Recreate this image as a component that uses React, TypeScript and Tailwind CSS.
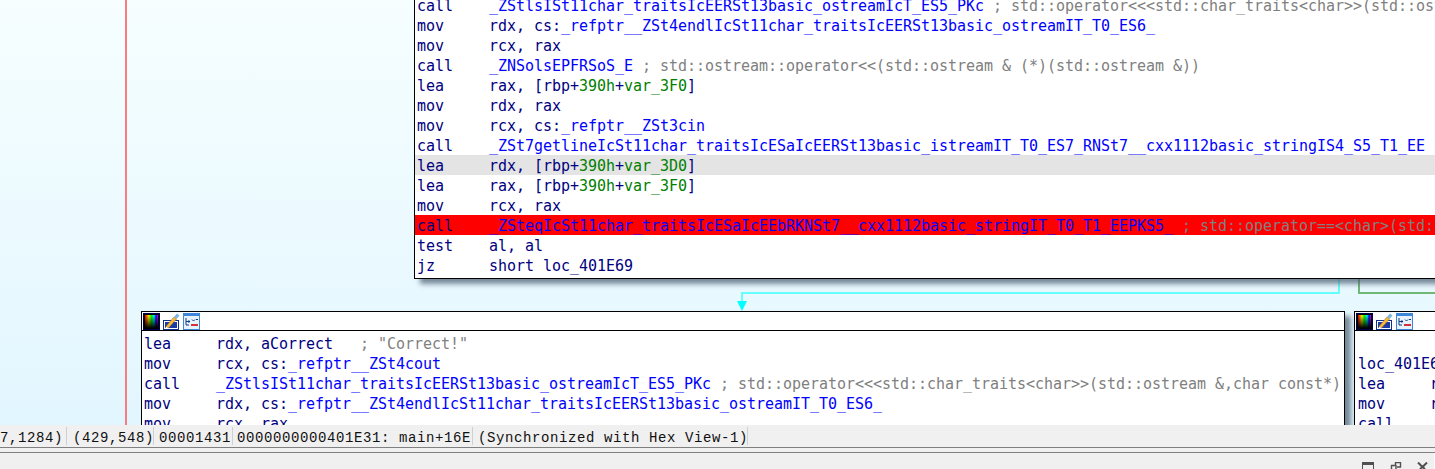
const mono = "font-['DejaVu_Sans_Mono','Liberation_Mono',monospace]";

const Op = ({ children }: { children: React.ReactNode }) => (
  <span className="text-[#0000ff]">{children}</span>
);
const Num = ({ children }: { children: React.ReactNode }) => (
  <span className="text-[#008000]">{children}</span>
);
const Note = ({ children }: { children: React.ReactNode }) => (
  <span className="text-[#808080]">{children}</span>
);

function Row({ ins, children, className = "" }: { ins: string; children: React.ReactNode; className?: string }) {
  return (
    <div className={`flex h-5 whitespace-pre pl-[2px] pt-px text-[#000080] ${className}`}>
      <span className="w-[72px] shrink-0">{ins}</span>
      <span>{children}</span>
    </div>
  );
}

function NodeIcons() {
  return (
    <div className="flex h-[19px] items-center gap-[3px] border-b border-black pl-[1px]">
      <svg width="17" height="17" viewBox="0 0 17 17">
        <defs>
          <linearGradient id="hue" x1="0" x2="1" y1="0" y2="0">
            <stop offset="0" stopColor="#ff0000" />
            <stop offset="0.3" stopColor="#ffff00" />
            <stop offset="0.5" stopColor="#00ff00" />
            <stop offset="0.7" stopColor="#00ffff" />
            <stop offset="0.85" stopColor="#0000ff" />
            <stop offset="1" stopColor="#ff00ff" />
          </linearGradient>
          <linearGradient id="shade" x1="0" x2="0" y1="0" y2="1">
            <stop offset="0" stopColor="#000" stopOpacity="0" />
            <stop offset="1" stopColor="#000" stopOpacity="1" />
          </linearGradient>
        </defs>
        <rect x="0.5" y="0.5" width="16" height="16" fill="#000" stroke="#000050" />
        <rect x="2" y="2" width="13" height="13" fill="url(#hue)" />
        <rect x="2" y="2" width="13" height="13" fill="url(#shade)" />
      </svg>
      <svg width="17" height="17" viewBox="0 0 17 17">
        <rect x="0.5" y="7.5" width="15" height="9" fill="#fff" stroke="#10308f" />
        <rect x="2" y="9" width="12" height="6" fill="#1c3aa8" />
        <path d="M3 13.5 L11 4 L13.5 6 L5.5 15 Z" fill="#f7b93e" stroke="#b0700f" strokeWidth="0.6" />
        <path d="M11 4 L14 0.5 L16.5 2.5 L13.5 6 Z" fill="#7ab4e6" />
        <path d="M3 13.5 L5.5 15 L2.5 15.5 Z" fill="#fff" />
      </svg>
      <svg width="17" height="17" viewBox="0 0 17 17">
        <rect x="0.5" y="0.5" width="16" height="16" fill="#e8f2fc" stroke="#3f86d8" />
        <rect x="1" y="1" width="15" height="2" fill="#3f86d8" />
        <path d="M3 5v7h3M3 8.5h4M5.5 7.5l1.5 1-1.5 1M9 6.5l1.5 1.5L12 6.5M13 6.5h2" fill="none" stroke="#0b3c80" />
        <rect x="8" y="11" width="7" height="2" fill="#d6303a" />
      </svg>
    </div>
  );
}

export default function App() {
  return (
    <div className={`relative h-[469px] w-[1435px] overflow-hidden bg-[#f0f0f0] text-[15px] leading-5 tracking-[-0.03px] ${mono}`}>
      {/* graph canvas */}
      <div className="absolute inset-x-0 top-0 h-[425px] bg-gradient-to-b from-[#f6feff] to-[#e2f6ff]" />
      <div className="absolute left-[125px] top-0 h-[425px] w-[2px] bg-[#fb7c7c]" />

      <div className="absolute left-[1338px] top-[278px] h-[16px] w-[2px] bg-[#66ffff]" />
      <div className="absolute left-[741px] top-[292px] h-[2px] w-[599px] bg-[#66ffff]" />
      <div className="absolute left-[741px] top-[292px] h-[9px] w-[2px] bg-[#66ffff]" />
      <div className="absolute left-[737px] top-[301px] h-0 w-0 border-x-[5px] border-t-[10px] border-x-transparent border-t-[#00ffff]" />
      <div className="absolute left-[1358px] top-[278px] h-[16px] w-[2px] bg-[#70b878]" />
      <div className="absolute left-[1358px] top-[292px] h-[2px] w-[77px] bg-[#70b878]" />

      {/* upper block */}
      <div className="absolute left-[414px] top-[-6px] w-[1040px] border border-black bg-white pb-[3px] shadow-[6px_5px_5px_rgba(70,90,110,0.7)]">
        <Row ins="call"><Op>_ZStlsISt11char_traitsIcEERSt13basic_ostreamIcT_ES5_PKc</Op> <Note>; std::operator&lt;&lt;&lt;std::char_traits&lt;char&gt;&gt;(std::ostream &amp;,char const*)</Note></Row>
        <Row ins="mov">rdx, cs:<Op>_refptr__ZSt4endlIcSt11char_traitsIcEERSt13basic_ostreamIT_T0_ES6_</Op></Row>
        <Row ins="mov">rcx, rax</Row>
        <Row ins="call"><Op>_ZNSolsEPFRSoS_E</Op> <Note>; std::ostream::operator&lt;&lt;(std::ostream &amp; (*)(std::ostream &amp;))</Note></Row>
        <Row ins="lea">rax, [rbp+<Num>390h</Num>+<Num>var_3F0</Num>]</Row>
        <Row ins="mov">rdx, rax</Row>
        <Row ins="mov">rcx, cs:<Op>_refptr__ZSt3cin</Op></Row>
        <Row ins="call"><Op>_ZSt7getlineIcSt11char_traitsIcESaIcEERSt13basic_istreamIT_T0_ES7_RNSt7__cxx1112basic_stringIS4_S5_T1_EE</Op></Row>
        <Row ins="lea" className="bg-[#e4e4e4]">rdx, [rbp+<Num>390h</Num>+<Num>var_3D0</Num>]</Row>
        <Row ins="lea">rax, [rbp+<Num>390h</Num>+<Num>var_3F0</Num>]</Row>
        <Row ins="mov">rcx, rax</Row>
        <Row ins="call" className="bg-[#ff0000]"><Op>_ZSteqIcSt11char_traitsIcESaIcEEbRKNSt7__cxx1112basic_stringIT_T0_T1_EEPKS5_</Op> <Note>; std::operator==&lt;char&gt;(std::__cxx11::basic_string)</Note></Row>
        <Row ins="test">al, al</Row>
        <Row ins="jz">short loc_401E69</Row>
      </div>

      {/* lower left block */}
      <div className="absolute left-[141px] top-[311px] w-[1204px] border border-black bg-white shadow-[6px_5px_5px_rgba(70,90,110,0.7)]">
        <NodeIcons />
        <div className="pt-[2px]">
          <Row ins="lea">rdx, aCorrect   <Note>; "Correct!"</Note></Row>
          <Row ins="mov">rcx, cs:<Op>_refptr__ZSt4cout</Op></Row>
          <Row ins="call"><Op>_ZStlsISt11char_traitsIcEERSt13basic_ostreamIcT_ES5_PKc</Op> <Note>; std::operator&lt;&lt;&lt;std::char_traits&lt;char&gt;&gt;(std::ostream &amp;,char const*)</Note></Row>
          <Row ins="mov">rdx, cs:<Op>_refptr__ZSt4endlIcSt11char_traitsIcEERSt13basic_ostreamIT_T0_ES6_</Op></Row>
          <Row ins="mov">rcx, rax</Row>
        </div>
      </div>

      {/* lower right block */}
      <div className="absolute left-[1354px] top-[311px] w-[200px] border border-black bg-white">
        <NodeIcons />
        <div className="pt-[22px]">
          <div className="h-5 whitespace-pre pl-[3px] pt-px text-[#000080]">loc_401E69:</div>
          <Row ins="lea" className="!pl-[3px]">rdx</Row>
          <Row ins="mov" className="!pl-[3px]">rcx</Row>
          <Row ins="call" className="!pl-[3px]"><Op>_ZSt</Op></Row>
        </div>
      </div>

      {/* status bar */}
      <div className="absolute inset-x-0 top-[425px] flex h-[22px] items-center whitespace-pre bg-[#f0f0f0] font-['Liberation_Mono',monospace] text-[14px] tracking-[0.6px] text-[#101010]">
        <div className="flex h-[18px] w-[67px] items-center justify-end border-r border-[#d0d0d0] pr-[3px] pt-[3px]">7,1284)</div>
        <div className="flex h-[18px] w-[87px] items-center border-r border-[#d0d0d0] pl-[6px] pt-[3px]">(429,548)</div>
        <div className="flex h-[18px] w-[79px] items-center border-r border-[#d0d0d0] pl-[5px] pt-[3px]">00001431</div>
        <div className="flex h-[18px] w-[240px] items-center border-r border-[#d0d0d0] pl-[4px] pt-[3px]">0000000000401E31: main+16E</div>
        <div className="flex h-[18px] w-[275px] items-center border-r border-[#d0d0d0] pl-[5px] pt-[3px]">(Synchronized with Hex View-1)</div>
      </div>
      <div className="absolute inset-x-0 top-[447px] h-[22px] border-t border-[#808080]">
        <div className="mt-[4px] h-px bg-[#808080]" />
      </div>
      <div className="absolute right-0 top-[453px] h-4 w-px bg-white" />

      {/* window buttons, cut by the bottom edge */}
      <svg className="absolute left-[1362px] top-[462px]" width="66" height="7" viewBox="0 0 66 7">
        <path d="M0.5 7V0.5H11.5V7" fill="none" stroke="#505050" />
        <rect x="0" y="0" width="12" height="3" fill="#505050" />
        <path d="M29.5 7V3.5H33.5V0.5H34.5M29.5 3.5H34.5M33.5 0.5H38.5V5H35M34 3.5V7" fill="none" stroke="#505050" strokeWidth="1.4" />
        <path d="M56 0.5L60.5 5L65 0.5M60.5 5L58 7M60.5 5L63 7" fill="none" stroke="#505050" strokeWidth="2" />
      </svg>
    </div>
  );
}
